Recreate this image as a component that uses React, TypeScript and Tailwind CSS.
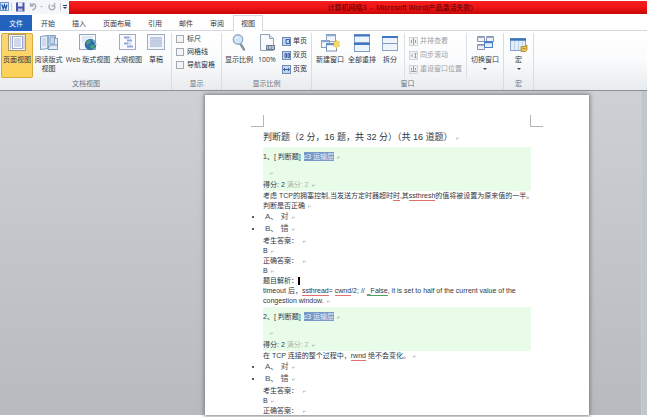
import React from 'react';

const Mark = () => (
  <svg viewBox="0 0 6 6" className="inline-block w-1 h-1 ml-0.5" aria-hidden="true">
    <path d="M5 2v2H1.5M3 2.8 1.5 4 3 5.2" fill="none" stroke="#9aa3ab" strokeWidth="0.8" />
  </svg>
);

function PageIcon() {
  return (
    <svg viewBox="0 0 18 17" className="w-[18px] h-[17px]">
      <rect x="0.5" y="0.5" width="17" height="16" fill="#f6f4ec" stroke="#a79a6c" />
      <rect x="4.5" y="2.5" width="10" height="12" fill="#fff" stroke="#9fa6d0" />
      <rect x="6" y="4" width="7" height="9" fill="#cfd9ee" />
      <path d="M2.5 2v13M16 2v13" stroke="#b9bcc4" />
    </svg>
  );
}

function ReadingIcon() {
  return (
    <svg viewBox="0 0 18 17" className="w-[18px] h-[17px]">
      <path d="M.5 2.5 8 1.500v13L.5 15.500zM8 1.500h7.500v3h2v11H8z" fill="#e3ecf7" stroke="#7f9bbd" />
      <path d="M2 5h4M2 7h4M2 9h4M2 11h4" stroke="#b4c6dd" />
      <path d="M10 3h4.500v7H10z" fill="#c6d8ee" stroke="#86a3c6" />
      <path d="M8 14.500 10.500 11h6.500" fill="none" stroke="#6f90b8" />
    </svg>
  );
}

function WebIcon() {
  return (
    <svg viewBox="0 0 18 17" className="w-[18px] h-[17px]">
      <rect x="0.5" y="0.5" width="16" height="15" fill="#f5f8fc" stroke="#93a7c0" />
      <path d="M3 3h11M3 5h5M3 7h3" stroke="#c9d6e7" />
      <circle cx="11.500" cy="10.500" r="5.800" fill="#2f6fae" />
      <path d="M7 8c2-2 4-3 5-2l-1 3-3 2zM12 11h4c0 2-1 4-3 4l-2-2z" fill="#4f9e76" />
      <path d="M13.500 6c2 1 3 3 3 5" stroke="#a9d2ee" fill="none" />
    </svg>
  );
}

function OutlineIcon() {
  return (
    <svg viewBox="0 0 18 17" className="w-[18px] h-[17px]">
      <rect x="0.5" y="0.5" width="16" height="15" fill="#f8fafd" stroke="#9eaec2" />
      <path d="M5 3.500h5M8 6.500h5M5 9.500h4M8 12.500h6" stroke="#8da9d8" strokeWidth="1.800" />
      <path d="M10 3.500h2M9 9.500h3" stroke="#c6d5ea" strokeWidth="1.800" />
    </svg>
  );
}

function DraftIcon() {
  return (
    <svg viewBox="0 0 18 17" className="w-[18px] h-[17px]">
      <rect x="0.5" y="0.5" width="17" height="15" fill="#f4f6fa" stroke="#9eaec2" />
      <rect x="3" y="3" width="12" height="10" fill="#c0cbe2" />
      <path d="M3 5.500h12M3 8.500h12M3 11h12" stroke="#cad4e8" />
    </svg>
  );
}

function ZoomIcon() {
  return (
    <svg viewBox="0 0 18 17" className="w-[18px] h-[17px]">
      <path d="m10.500 10 3.500 5.500" stroke="#8792a3" strokeWidth="2.400" strokeLinecap="round" />
      <circle cx="8" cy="5.500" r="4.700" fill="#cfe5f8" stroke="#93a9c6" strokeWidth="1.400" />
      <path d="M5.500 5c.5-1.500 2-2 3-1.800" stroke="#fff" fill="none" />
    </svg>
  );
}

function HundredIcon() {
  return (
    <svg viewBox="0 0 18 17" className="w-[18px] h-[17px]">
      <path d="M2.500.5h9l4 4v12h-13z" fill="#f7f9fc" stroke="#93a3b7" />
      <path d="M11.500.5v4h4" fill="#dbe4ef" stroke="#93a3b7" />
      <rect x="8" y="11" width="9" height="5" fill="#6c7c95" />
      <path d="M9.500 12v3M11.500 12.500h1v2h-1zM14 12.500h1.500v2H14z" stroke="#e8edf4" strokeWidth="0.700" fill="none" />
    </svg>
  );
}

function NewWindowIcon() {
  return (
    <svg viewBox="0 0 19 18" className="w-[19px] h-[18px]">
      <rect x="5.500" y="0.500" width="9" height="7" fill="#f3f7fc" stroke="#8aa0be" />
      <path d="M5 1.500h10" stroke="#8aa9d6" strokeWidth="1.500" />
      <rect x="0.500" y="6.500" width="8" height="7" fill="#f3f7fc" stroke="#8aa0be" />
      <path d="M0 7.500h9" stroke="#8aa9d6" strokeWidth="1.500" />
      <rect x="5.500" y="9.500" width="10" height="7.500" fill="#fff" stroke="#7690b3" />
      <path d="M5 10.500h8" stroke="#5d8bcb" strokeWidth="1.500" />
      <path d="m15.500 6 1 2 2-.5-.7 2.200 1.200 2.300-2.300.2-1.200 2.500-1.200-2.500-2.300-.2 1.200-2-.7-2.500 2 .5z" fill="#f8dc68" stroke="#dfb93d" strokeWidth="0.500" />
    </svg>
  );
}

function ArrangeIcon() {
  return (
    <svg viewBox="0 0 16 18" className="w-[16px] h-[18px]">
      <rect x="0.500" y="0.500" width="15" height="8" fill="#eef4fb" stroke="#7f9cc3" />
      <rect x="0.500" y="9.500" width="15" height="8" fill="#eef4fb" stroke="#7f9cc3" />
      <path d="M0 1.500h16M0 10h16" stroke="#3e77c3" strokeWidth="2" />
    </svg>
  );
}

function SplitIcon() {
  return (
    <svg viewBox="0 0 16 18" className="w-[16px] h-[18px]">
      <rect x="0.500" y="2.500" width="15" height="14" fill="#eef4fb" stroke="#8ba3c3" />
      <path d="M0 3h16" stroke="#3e77c3" strokeWidth="2" />
      <path d="M1 9.500h14" stroke="#7e9cc6" />
    </svg>
  );
}

function SwitchIcon() {
  return (
    <svg viewBox="0 0 19 17" className="w-[19px] h-[17px]">
      <path d="M1.500 2.500h7v5h-7zM10.500 2.500h7v5h-7zM1.500 10.500h7v5h-7z" fill="#eef2f8" stroke="#8594aa" />
      <path d="M1 3.500h8M10 3.500h8M1 11.500h8" stroke="#9eacc0" />
      <rect x="8.500" y="7.500" width="8" height="6" fill="#e2eefc" stroke="#4e80c4" />
      <path d="M8 8.500h9" stroke="#4e80c4" strokeWidth="1.500" />
    </svg>
  );
}

function MacroIcon() {
  return (
    <svg viewBox="0 0 19 18" className="w-[19px] h-[18px]">
      <rect x="1.500" y="4.500" width="15" height="12" fill="#e4eefa" stroke="#8aa4c6" />
      <path d="M1 5.500h16" stroke="#3e73be" strokeWidth="2.500" />
      <path d="M5.500 7v9M9.500 7v9M13.500 7v9" stroke="#c0d2e9" />
      <path d="M12 12.500h4l2-1.500v5l-1.500 1.500H12z" fill="#ecc550" stroke="#a9842b" strokeWidth="0.800" />
      <path d="M13.500 14.500h3" stroke="#a9842b" strokeWidth="0.800" />
    </svg>
  );
}

const pageIcons: Record<string, string> = {
  one: 'M4 2.500h3.500v4H4z',
  two: 'M3 2.500h1.500v4H3zM6 2.500h1.500v4H6z',
  width: 'M1.500 4.500h6M3 3 1.500 4.500 3 6M6 3l1.500 1.500L6 6',
  side: 'M4.500 1v7M2.500 3v3M6.500 3v3',
  sync: 'M3 3v3M6.500 2v5M5.500 3l1-1 1 1M5.500 6l1 1 1-1',
  reset: 'M1.500 6.500h6M4.500 1v5M2.500 3v2M6.500 3v2',
};

interface SmallButtonProps {
  icon: string;
  label: string;
  disabled?: boolean;
}

function SmallButton({ icon, label, disabled }: SmallButtonProps) {
  return (
    <button type="button" disabled={disabled} className={`flex items-center gap-[2px] h-[14px] whitespace-nowrap ${disabled ? 'text-[#9c9fa4]' : 'text-[#2c3542]'}`}>
      <svg viewBox="0 0 9 9" className="w-[9px] h-[9px] shrink-0">
        <rect x="0.500" y="0.500" width="8" height="8" fill={disabled ? '#f0f1f2' : '#c3d4ee'} stroke={disabled ? '#d3d5d8' : '#6d8bb5'} />
        <path d={pageIcons[icon]} fill="none" stroke={disabled ? '#9b9ea3' : '#3d61a0'} />
      </svg>
      {label}
    </button>
  );
}

interface BigButtonProps {
  icon: React.ReactNode;
  label: string;
  width: string;
  second?: string;
  active?: boolean;
  arrow?: boolean;
}

function BigButton({ icon, label, width, second, active, arrow }: BigButtonProps) {
  return (
    <button
      type="button"
      className={`${width} shrink-0 h-[45px] flex flex-col items-center pt-px whitespace-nowrap leading-[9px] rounded-[2px] ${active ? 'bg-linear-to-b from-[#fbd877] to-[#fbd054] outline -outline-offset-1 outline-[#d9ab3e]' : ''}`}
    >
      <span className="h-[21px]">{icon}</span>
      <span>{label}</span>
      {second && <span>{second}</span>}
      {arrow && <span className="mt-1 border-x-2 border-t-2 border-x-transparent border-t-[#444]" />}
    </button>
  );
}

interface GroupProps {
  title: string;
  width: string;
  children: React.ReactNode;
}

function Group({ title, width, children }: GroupProps) {
  return (
    <section className={`${width} shrink-0 flex flex-col border-r border-[#d9dce1]`}>
      <div className="flex flex-1">{children}</div>
      <h2 className="text-center leading-3 text-[#69717d]">{title}</h2>
    </section>
  );
}

function Question({ no, children }: { no: number; children: React.ReactNode }) {
  return (
    <article>
      <div className="mx-3 bg-[#e9fce9] pt-1 leading-3">
        <h3>
          {no}、[ 判断题] <span className="bg-[#7899c8] text-[#e4edf9] inline-block leading-[9px] ml-px">c3 运输层</span>
          <Mark />
        </h3>
        <p className="mt-1 pl-1"><Mark /></p>
        <p>
          得分: 2 <span className="text-[#a9b5aa]">满分: 2</span>
          <Mark />
        </p>
      </div>
      <div className="px-3 leading-[10px]">{children}</div>
      <ul className="leading-3 mb-px text-[8px] text-[#4b515b]">
        {['A、 对', 'B、 错'].map((option) => (
          <li key={option} className="flex items-center pl-px">
            <span className="w-[13px]">
              <span className="block w-[2px] h-[2px] rounded-full bg-[#222]" />
            </span>
            {option}
            <Mark />
          </li>
        ))}
      </ul>
    </article>
  );
}

const tabs = ['开始', '插入', '页面布局', '引用', '邮件', '审阅'];
const spell = 'inline-block leading-2 border-b border-[#e07070]';

export default function App() {
  return (
    <div className="h-screen flex flex-col overflow-hidden bg-white pr-[3px] pb-0.5 text-[7px] text-[#303743] font-['Liberation_Sans','Noto_Sans_CJK_SC',sans-serif]">
      <header className="flex h-[14px] shrink-0">
        <div className="w-[69px] shrink-0 flex items-center bg-[#f4f6f9]">
          <svg viewBox="0 0 69 14" className="w-[69px] h-[14px]">
            <rect x="0.500" y="2.500" width="8" height="8" fill="#dbe8f8" stroke="#6c97cd" />
            <path d="m2 4.500 1.200 4.500 1.300-4 1.300 4L7 4.500" fill="none" stroke="#2458a4" strokeWidth="1.200" />
            <path d="M11.500 3v8M60.500 3v8" stroke="#c5c9cf" />
            <path d="M16 2.500h8.500v9H16z" fill="#4a56ae" />
            <path d="M18 2.500h4.500v4H18z" fill="#e8edf8" />
            <path d="M18 8.500h4.500v3H18z" fill="#b7c3e4" />
            <path d="M30.500 3v3h3.200M30.800 5.800c2-3 5-2 5 .5 0 2-1.500 3.200-3.500 3.700" fill="none" stroke="#a9afb9" strokeWidth="1.400" />
            <path d="M40 6h3l-1.500 1.500z" fill="#b4b8bf" />
            <path d="M54.500 3v3h-3M49.700 4.500c-1.500 3 0 5.200 2.300 5.200 2.500 0 3.500-2.200 2.500-4" fill="none" stroke="#a9afb9" strokeWidth="1.400" />
            <path d="M63 5.500h4" stroke="#333d55" />
            <path d="M63 7h4l-2 2z" fill="#333d55" />
          </svg>
        </div>
        <h1 className="flex-1 pl-[84px] text-center leading-[14px] mt-px bg-linear-to-b from-[#f42020] via-[#ee1414] to-[#c90808] text-[#4d0000] whitespace-pre font-['Open_Sans','Noto_Sans_CJK_SC',sans-serif]">
          计算机网络3  -  Microsoft Word(产品激活失败)
        </h1>
      </header>

      <nav className="flex h-[17px] shrink-0 pt-px border-b border-[#d5d9df] bg-white leading-[15px]">
        <button type="button" className="w-8 h-4 bg-[#2463bd] text-white">文件</button>
        <div className="flex gap-px ml-px">
          {tabs.map((tab) => (
            <button key={tab} type="button" className="px-2 h-4">{tab}</button>
          ))}
          <button type="button" className="px-[7px] h-4 bg-white border-x border-t border-[#d5d9df]">视图</button>
        </div>
      </nav>

      <div className="flex h-[60px] shrink-0 pt-0.5 bg-linear-to-b from-white via-[#fafbfc] to-[#e8ebef] border-b border-[#8c9198] font-['Open_Sans','Noto_Sans_CJK_SC',sans-serif]">
        <Group title="文档视图" width="w-[172px] pl-px">
          <BigButton icon={<PageIcon />} label="页面视图" width="w-8" active />
          <BigButton icon={<ReadingIcon />} label="阅读版式" second="视图" width="w-[31px]" />
          <BigButton icon={<WebIcon />} label="Web 版式视图" width="w-[48px]" />
          <BigButton icon={<OutlineIcon />} label="大纲视图" width="w-8" />
          <BigButton icon={<DraftIcon />} label="草稿" width="w-6" />
        </Group>
        <Group title="显示" width="w-[50px]">
          <div className="flex flex-col gap-px pl-1">
            {['标尺', '网格线', '导航窗格'].map((item) => (
              <label key={item} className="flex items-center gap-[3px] leading-3 whitespace-nowrap">
                <input type="checkbox" className="appearance-none w-2 h-2 border border-[#a5a9b0] bg-[#f3f4f6]" />
                {item}
              </label>
            ))}
          </div>
        </Group>
        <Group title="显示比例" width="w-[90px]">
          <BigButton icon={<ZoomIcon />} label="显示比例" width="w-[34px]" />
          <BigButton icon={<HundredIcon />} label="100%" width="w-[22px]" />
          <div className="flex flex-col pl-1 pt-px">
            <SmallButton icon="one" label="单页" />
            <SmallButton icon="two" label="双页" />
            <SmallButton icon="width" label="页宽" />
          </div>
        </Group>
        <Group title="窗口" width="w-[192px]">
          <div className="flex pl-0.5">
            <BigButton icon={<NewWindowIcon />} label="新建窗口" width="w-8" />
            <BigButton icon={<ArrangeIcon />} label="全部重排" width="w-8" />
            <BigButton icon={<SplitIcon />} label="拆分" width="w-6" />
          </div>
          <div className="flex flex-col ml-0.5 px-1 pt-px border-x border-[#dcdfe4]">
            <SmallButton icon="side" label="并排查看" disabled />
            <SmallButton icon="sync" label="同步滚动" disabled />
            <SmallButton icon="reset" label="重设窗口位置" disabled />
          </div>
          <BigButton icon={<SwitchIcon />} label="切换窗口" width="w-9" arrow />
        </Group>
        <Group title="宏" width="w-[30px]">
          <BigButton icon={<MacroIcon />} label="宏" width="w-[29px]" arrow />
        </Group>
      </div>

      <main className="flex flex-1 min-h-0 pt-1 bg-linear-to-b from-[#cdd1d6] to-[#b7bbc0]">
        <div className="flex-1 min-w-0 ml-[205px] mr-[52px]">
          <div className="h-full bg-white px-[46px] pt-5 overflow-hidden shadow-[0_0_4px_1px_#777b80]">
            <div className="flex justify-between">
              <span className="w-[13px] h-3 border-r border-b border-[#b5b5b5]" />
              <span className="w-[13px] h-3 border-l border-b border-[#b5b5b5]" />
            </div>
            <h2 className="px-3 my-1 text-[9px] leading-3 whitespace-nowrap">
              判断题（2 分，16 题，共 32 分）（共 16 道题）<Mark />
            </h2>

            <Question no={1}>
              <p className="whitespace-nowrap">
                考虑 TCP的拥塞控制,当发送方定时器超时<span className={spell}>时</span>,其<span className={spell}>ssthresh</span>的值将被设置为原来值的一半。
              </p>
              <p>判断是否正确<Mark /></p>
            </Question>
            <div className="px-3 leading-[10px] pb-px">
              <p>考生答案： <Mark /></p>
              <p>B<Mark /></p>
              <p>正确答案： <Mark /></p>
              <p>B<Mark /></p>
              <p>题目解析：<span className="inline-block w-0.5 h-2 bg-black align-middle" /></p>
              <p>
                timeout 后，<span className={spell}>ssthread</span>= <span className={spell}>cwnd</span>/2; // <span className="inline-block leading-2 border-b border-[#4da35c]">_False</span>, it is set to half of the current value of the
                <br />
                congestion window.<Mark />
              </p>
            </div>

            <Question no={2}>
              <p>
                在 TCP 连接的整个过程中，<span className={spell}>rwnd</span> 绝不会变化。<Mark />
              </p>
            </Question>
            <div className="px-3 leading-[10px]">
              <p>考生答案： <Mark /></p>
              <p>B<Mark /></p>
              <p>正确答案： <Mark /></p>
            </div>
          </div>
        </div>
        <div className="w-[6px] shrink-0 -mt-1 border-l border-[#c9cdd2] bg-[#c2c6cb]" />
      </main>
    </div>
  );
}
